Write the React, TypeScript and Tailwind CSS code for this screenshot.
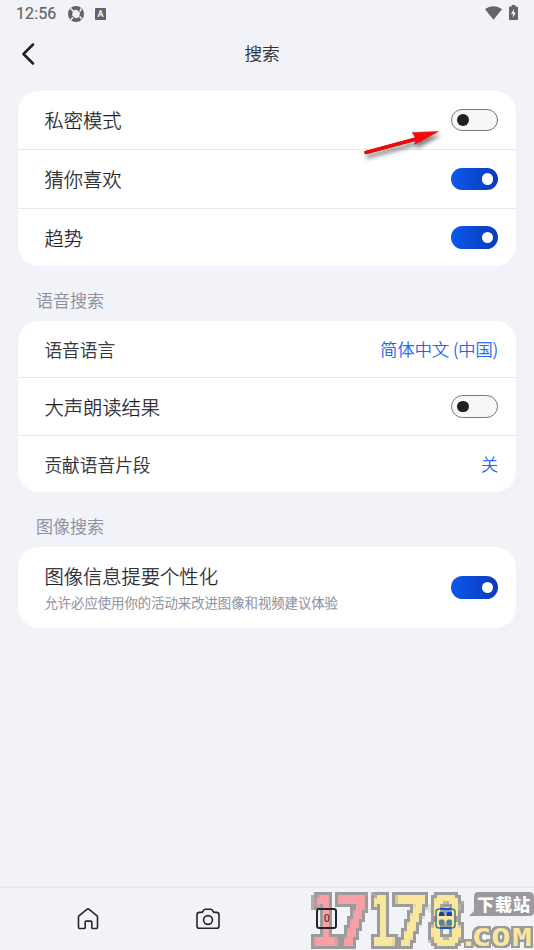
import React from 'react';

interface RowProps {
  title: string;
  note?: string;
  height: string;
  small?: boolean;
  children: React.ReactNode;
}

const Toggle: React.FC<{ on?: boolean }> = ({ on }) => {
  const [checked, setChecked] = React.useState(!!on);
  return (
    <button
      role="switch"
      aria-checked={checked}
      onClick={() => setChecked(!checked)}
      className={
        checked
          ? 'flex h-[22.5px] w-[47px] shrink-0 items-center justify-end rounded-full bg-gradient-to-r from-[#0d57ee] to-[#0a3bb8] pr-[5px]'
          : 'flex h-[22.5px] w-[47px] shrink-0 items-center rounded-full border border-[#777] bg-[#f7f7f7] pl-[5px]'
      }
    >
      <span className={checked ? 'size-[11.5px] rounded-full bg-white' : 'size-[11.5px] rounded-full bg-[#202020]'} />
    </button>
  );
};

const Row: React.FC<RowProps> = ({ title, note, height, small, children }) => (
  <div className={`flex items-center justify-between pl-[26.4px] pr-[17.9px] ${height}`}>
    <div>
      <div className={small ? 'text-[17.7px] leading-6' : 'text-[19.3px] leading-7'}>{title}</div>
      {note && <div className="mt-[3px] text-[13.35px] leading-5 text-[#858a9b]">{note}</div>}
    </div>
    {children}
  </div>
);

const StatusBar: React.FC = () => (
  <div className="flex h-7 items-center pl-4 pr-4 text-[#646464]">
    <span className="w-10 font-[Roboto] text-base font-normal tracking-[0.1px] [-webkit-text-stroke:0.2px]">12:56</span>
    <svg className="ml-3 size-4" viewBox="0 0 16 16">
      <circle cx="8" cy="8" r="8" fill="#646464" />
      <path d="M5 4.4 8.8 3.8 12 6.8 11.2 11.2 7.4 12.2 4 9.2Z" fill="#f2f3f8" />
      <path d="M5.2 5 2.4 2.4M11.8 5.6l1.6-3.4M11.8 10.4l1.8 2.8M5 11.2l-2.2 2.6" stroke="#f2f3f8" strokeWidth="1.5" />
    </svg>
    <span className="ml-[11px] flex h-3 w-[11px] items-center justify-center rounded-[1px] bg-[#646464] font-[Roboto] text-[9px] font-bold leading-3 text-[#f2f3f8]">A</span>
    <svg className="-mt-[2px] ml-auto h-[14px] w-[17px]" viewBox="0 0 17 14">
      <path d="M0 3.2C4.9-.9 12.1-.9 17 3.2L8.5 13.8Z" fill="#646464" />
    </svg>
    <svg className="-mt-[3px] ml-[7px] h-[15px] w-[9px]" viewBox="0 0 9 15">
      <path d="M2.7 0h3.6v1.5H8q1 0 1 1V14q0 1-1 1H1q-1 0-1-1V2.5q0-1 1-1h1.7Z" fill="#646464" />
      <path d="M5.2 3.8 2 9h2l-.3 3.8L7 7.6H4.9Z" fill="#f2f3f8" />
    </svg>
  </div>
);

const TabBar: React.FC = () => (
  <nav className="mt-auto flex h-16 items-start justify-between border-t-2 border-[#e9eaef] pl-[77px] pr-[78px] pt-5">
    <svg className="size-[22px]" viewBox="0 0 22 22" fill="none" stroke="#24262b" strokeWidth="1.6" strokeLinejoin="round">
      <path d="M1.5 9.1q0-.9.7-1.5l7.7-6.3q1.1-.8 2.2 0l7.7 6.3q.7.6.7 1.5v10.2q0 1.2-1.2 1.2h-3.4q-1.1 0-1.1-1.1v-5.3q0-1-1-1H9.2q-1 0-1 1v5.3q0 1.1-1.1 1.1H2.7q-1.2 0-1.2-1.2Z" />
    </svg>
    <svg className="-ml-px h-[22px] w-6" viewBox="0 0 24 22" fill="none" stroke="#24262b" strokeWidth="1.6" strokeLinejoin="round">
      <path d="M1 6.8Q1 4.4 3.4 4.4h2q1 0 1.5-.9l.6-1.1q.6-1.2 1.9-1.2h5.2q1.3 0 1.9 1.2l.6 1.1q.5.9 1.5.9h2q2.4 0 2.4 2.4v11.1q0 2.4-2.4 2.4H3.4Q1 20.3 1 17.9Z" />
      <circle cx="12" cy="12" r="4.4" />
    </svg>
    <span className="relative z-20 -ml-px flex size-[21px] items-center justify-center rounded-[3px] border-2 border-[#24262b] font-[Roboto] text-[11px] font-medium leading-none text-[#743039]">0</span>
    <svg className="relative z-20 size-[21px]" viewBox="0 0 21 21">
      <rect x="1" y="1" width="19" height="19" rx="3" fill="none" stroke="#44798d" strokeWidth="1.5" />
      <path d="M5 1h11M5 20h11" stroke="#1755d8" strokeWidth="1.8" />
      <path d="M4 8V6q0-2.3 2.3-2.3T9.5 6v2ZM11.5 8V6q0-2.3 2.8-2.3T17 6v2Z" fill="#123eaf" />
      <rect x="4" y="11.5" width="5.5" height="6" rx="1.8" fill="#568190" />
      <rect x="11.5" y="11.5" width="5.5" height="6" rx="1.8" fill="#568190" />
    </svg>
  </nav>
);

const Watermark: React.FC = () => (
  <svg className="pointer-events-none absolute bottom-0 right-0 z-10 h-[64px] w-[226px] overflow-visible" viewBox="308 886 226 64">
    <defs>
      {/* samples one pixel per 3px cell, grows it back to a block, then adds a grey rim */}
      <filter id="blocks" filterUnits="userSpaceOnUse" x="308" y="886" width="226" height="64" colorInterpolationFilters="sRGB">
        <feFlood x="309" y="887" width="1" height="1" floodColor="#000" result="dot" />
        <feOffset in="dot" x="308" y="886" width="3" height="3" result="tile" />
        <feTile in="tile" result="grid" />
        <feComposite in="SourceGraphic" in2="grid" operator="in" />
        <feMorphology operator="dilate" radius="1" result="fill" />
        <feMorphology in="fill" operator="dilate" radius="3" result="wide" />
        <feColorMatrix in="wide" values="0 0 0 0 .61  0 0 0 0 .61  0 0 0 0 .61  0 0 0 3 0" result="edge" />
        <feMerge>
          <feMergeNode in="edge" />
          <feMergeNode in="fill" />
        </feMerge>
      </filter>
      <filter id="rim" filterUnits="userSpaceOnUse" x="464" y="920" width="70" height="30" colorInterpolationFilters="sRGB">
        <feMorphology in="SourceGraphic" operator="dilate" radius="2" result="wide" />
        <feColorMatrix in="wide" values="0 0 0 0 .61  0 0 0 0 .61  0 0 0 0 .61  0 0 0 3 0" result="edge" />
        <feMerge>
          <feMergeNode in="edge" />
          <feMergeNode in="SourceGraphic" />
        </feMerge>
      </filter>
    </defs>
    <g fontFamily="DejaVu Sans Mono" fontWeight="700" fontSize="70" filter="url(#blocks)">
      <g fill="#f99fa7">
        <text transform="translate(311 946) scale(.66 1)">1</text>
        <text transform="translate(335 946) scale(.84 1)">7</text>
      </g>
      <g fill="#f9e79e">
        <text transform="translate(369 946) scale(.64 1)">1</text>
        <text transform="translate(392.5 946) scale(.86 1)">7</text>
        <text transform="translate(428 946) scale(.86 1)">8</text>
      </g>
    </g>
    <g filter="url(#rim)" fontFamily="DejaVu Sans Mono" fontWeight="700" fontSize="25" fill="#f9e79e">
      <text transform="translate(466 946) scale(1.3 1)" x="-5.5 4.5 19.5 35.5">.COM</text>
    </g>
    <path d="M474 897q0-5 4-5h51q5 0 5 5v15q0 4-5 4h-60l5-5Z" fill="#9c9a9e" />
    <text x="477" y="911" textLength="53" fontFamily="Noto Sans CJK SC, sans-serif" fontWeight="900" fontSize="17" fill="#fff">下载站</text>
  </svg>
);

const Pointer: React.FC = () => (
  <svg className="pointer-events-none absolute left-[360px] top-[124px] h-9 w-[88px] drop-shadow-[2px_4px_2px_rgba(0,0,0,0.5)]" viewBox="360 124 88 36">
    <path d="M366 152.5 416 139" stroke="#7c2020" strokeWidth="3.6" strokeLinecap="round" />
    <path d="M366 152.5 416 139" stroke="#ff0505" strokeWidth="2.9" strokeLinecap="round" />
    <path d="M438.5 131.5 412.2 132.4 415.5 137.8 415 144.3Z" fill="#ff0505" stroke="#8c3030" strokeWidth=".5" />
  </svg>
);

export default function App() {
  return (
    <div className="relative flex h-[950px] w-[534px] flex-col overflow-hidden bg-[#f2f3f8] font-['Noto_Sans_CJK_SC',sans-serif] font-light text-[#202127]">
      <StatusBar />
      <header className="relative flex h-[51px] items-center justify-center pr-[10px]">
        <button aria-label="返回" className="absolute left-[21px] top-[15px]">
          <svg className="h-[22px] w-[14px]" viewBox="0 0 14 22" fill="none" stroke="#202127" strokeWidth="2.5" strokeLinecap="round" strokeLinejoin="round">
            <path d="M12 1.5 2.5 11 12 20.5" />
          </svg>
        </button>
        <h1 className="text-[17.6px] [-webkit-text-stroke:0.25px]">搜索</h1>
      </header>

      <main className="px-[18px] pt-3 [-webkit-text-stroke:0.25px]">
        <section className="h-[175px] divide-y divide-[#e9e9ec] overflow-hidden rounded-[21px] bg-white">
          <Row title="私密模式" height="h-[59px]"><Toggle /></Row>
          <Row title="猜你喜欢" height="h-[59px]"><Toggle on /></Row>
          <Row title="趋势" height="h-[57px]"><Toggle on /></Row>
        </section>

        <h2 className="flex h-[55px] items-end pb-2 pl-[18px] text-[17px] leading-[26px] text-[#858a9b]">语音搜索</h2>
        <section className="h-[171px] divide-y divide-[#e9e9ec] overflow-hidden rounded-[21px] bg-white">
          <Row title="语音语言" height="h-[57px]" small><span className="text-[17.2px] text-[#0d5bf2]">简体中文 (中国)</span></Row>
          <Row title="大声朗读结果" height="h-[58px]"><Toggle /></Row>
          <Row title="贡献语音片段" height="h-[56px]" small><span className="text-[17.2px] text-[#0d5bf2]">关</span></Row>
        </section>

        <h2 className="flex h-[55px] items-end pb-2 pl-[18px] text-[17px] leading-[26px] text-[#858a9b]">图像搜索</h2>
        <section className="rounded-[21px] bg-white">
          <Row title="图像信息提要个性化" note="允许必应使用你的活动来改进图像和视频建议体验" height="h-[81px]"><Toggle on /></Row>
        </section>
      </main>

      <TabBar />
      <Pointer />
      <Watermark />
    </div>
  );
}
